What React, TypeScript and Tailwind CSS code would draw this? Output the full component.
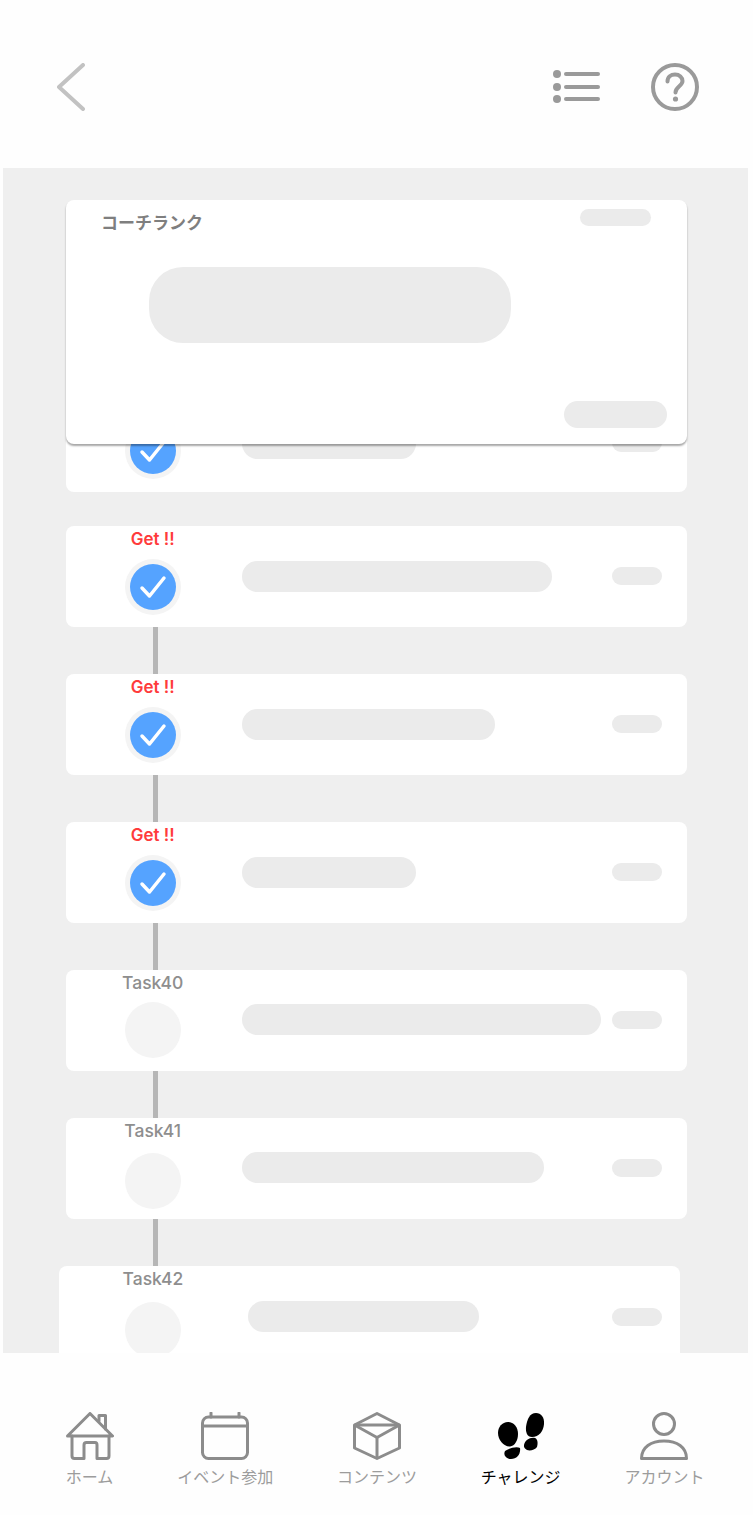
import React from "react";

const rows = [
  { label: "Get !!", done: true, bar: "w-[174px]", barTop: "mt-[37px]", pillTop: "mt-[43px]", gap: "mt-[9px]", labelTop: "mt-[3px]" },
  { label: "Get !!", done: true, bar: "w-[310px]", barTop: "mt-[35px]", pillTop: "mt-[41px]", gap: "mt-[10px]", labelTop: "mt-[3px]" },
  { label: "Get !!", done: true, bar: "w-[253px]", barTop: "mt-[35px]", pillTop: "mt-[41px]", gap: "mt-[10px]", labelTop: "mt-[3px]" },
  { label: "Get !!", done: true, bar: "w-[174px]", barTop: "mt-[34.5px]", pillTop: "mt-[41px]", gap: "mt-[10px]", labelTop: "mt-[3px]" },
  { label: "Task40", done: false, bar: "w-[359px]", barTop: "mt-[34px]", pillTop: "mt-[41px]", gap: "mt-[9px]", labelTop: "mt-[3px]" },
  { label: "Task41", done: false, bar: "w-[302px]", barTop: "mt-[34px]", pillTop: "mt-[41px]", gap: "mt-[12px]", labelTop: "mt-[3px]" },
];

const TaskCircle = ({ done }: { done: boolean }) => (
  <div className="flex h-[56px] w-[56px] items-center justify-center rounded-full bg-[#f4f4f4]">
    {done && (
      <div className="h-[46px] w-[46px] rounded-full bg-[#55a3ff]">
        <svg width="46" height="46" viewBox="0 0 46 46" fill="none">
          <path d="M12 24 L19.5 32 L34 14" stroke="#fff" strokeWidth="3.5" strokeLinecap="round" strokeLinejoin="round" />
        </svg>
      </div>
    )}
  </div>
);

const TaskLabel = ({ label, done, className }: { label: string; done: boolean; className: string }) => (
  <span
    className={`${className} h-[20px] whitespace-nowrap font-['Inter',sans-serif] leading-[20px] ${
      done ? "text-[17px] font-semibold text-[#ff3b3b]" : "text-[17.5px] font-medium text-[#8e8e8e]"
    }`}
  >
    {label}
  </span>
);

const Connector = () => <div className="ml-[149.5px] h-[47px] w-[5px] shrink-0 bg-[#b6b6b6]" />;

const HomeIcon = () => (
  <svg width="48" height="48" viewBox="0 0 48 48" fill="none" stroke="#8c8c8c" strokeWidth="3" strokeLinejoin="round" strokeLinecap="round">
    <path d="M1.5 24 L24 1.5 L46.5 24 Z" />
    <path d="M33 9 V3.5 H39.5 V17" />
    <path d="M6 24 V44 Q6 46.5 8.5 46.5 H18 V33 Q18 30.5 20.5 30.5 H29 Q31 30.5 31 33 V46.5 H40.5 Q43 46.5 43 44 V24" />
  </svg>
);

const CalendarIcon = () => (
  <svg width="48" height="48" viewBox="0 0 48 48" fill="none" stroke="#8c8c8c" strokeWidth="3" strokeLinecap="round">
    <rect x="1.5" y="5" width="45" height="41.5" rx="6" />
    <path d="M1.5 14 H46.5" />
    <path d="M10 1 V5 M38 1 V5" />
  </svg>
);

const BoxIcon = () => (
  <svg width="48" height="48" viewBox="0 0 48 48" fill="none" stroke="#8c8c8c" strokeWidth="3" strokeLinejoin="round">
    <path d="M24 1.5 L46.5 13 V36 L24 46.5 L1.5 36 V13 Z" />
    <path d="M1.5 13 H46.5" />
    <path d="M1.5 13 L24 25.5 L46.5 13" />
    <path d="M24 25.5 V46.5" />
  </svg>
);

const FeetIcon = () => (
  <svg width="48" height="48" viewBox="0 0 48 48" fill="#000">
    <path d="M11 10 C17 10 21 15 21 22 C21 28 18 34 13 34.5 C7 35 1 28 1 21 C1 15 5 10 11 10 Z" />
    <path d="M8 39 C12 36 20 34 23 36 C24 42 20 47 14 47 C9 47 6 43 8 39 Z" />
    <path d="M39 1 C44 1 47.5 5 47 12 C46.5 19 42 25 35 25 C30 25 28.5 20 29 15 C30 7 33 1 39 1 Z" />
    <path d="M27 33 C28 28 33 25 38 26 C41 27 41 32 40 35 C38 38 33 39 30 38 C28 37 26.5 35 27 33 Z" />
  </svg>
);

const PersonIcon = () => (
  <svg width="48" height="48" viewBox="0 0 48 48" fill="none" stroke="#8c8c8c" strokeWidth="3" strokeLinejoin="round">
    <circle cx="24" cy="12" r="10.5" />
    <path d="M1.5 46.5 C1.5 35 11 29 24 29 C37 29 46.5 35 46.5 46.5 Z" />
  </svg>
);

const navItems = [
  { label: "ホーム", icon: <HomeIcon />, active: false },
  { label: "イベント参加", icon: <CalendarIcon />, active: false },
  { label: "コンテンツ", icon: <BoxIcon />, active: false },
  { label: "チャレンジ", icon: <FeetIcon />, active: true },
  { label: "アカウント", icon: <PersonIcon />, active: false },
];

export default function App() {
  return (
    <div className="flex h-[1515px] w-[753px] flex-col overflow-hidden bg-[#fefefe] font-['Noto_Sans_CJK_JP',sans-serif]">
      {/* Header */}
      <header className="flex h-[168px] shrink-0 items-start pl-[57px] pr-[54px] pt-[63px]">
        <svg width="28" height="48" viewBox="0 0 28 48" fill="none" stroke="#c2c2c2" strokeWidth="4" strokeLinecap="round" strokeLinejoin="round">
          <path d="M26 2 L2 24 L26 46" />
        </svg>
        <svg className="ml-auto mt-[3px]" width="50" height="42" viewBox="0 0 50 42" fill="#9a9a9a">
          <circle cx="5" cy="8" r="4" />
          <circle cx="5" cy="21" r="4" />
          <circle cx="5" cy="33" r="4" />
          <rect x="12" y="6" width="36" height="4" rx="2" />
          <rect x="12" y="19" width="36" height="4" rx="2" />
          <rect x="12" y="31" width="36" height="4" rx="2" />
        </svg>
        <svg className="ml-[49px]" width="48" height="48" viewBox="0 0 48 48" fill="none" stroke="#9a9a9a" strokeWidth="4">
          <circle cx="24" cy="24" r="22" />
          <path d="M16.5 18.5 C16.5 14 20 11.5 24 11.5 C28.5 11.5 31.5 14.5 31.5 18 C31.5 23 24.5 23.5 24.5 29.5" strokeLinecap="round" />
          <circle cx="24.5" cy="36" r="2.6" fill="#9a9a9a" stroke="none" />
        </svg>
      </header>

      {/* Task list */}
      <main className="relative mx-[3px] h-[1185px] w-[745px] shrink-0 overflow-hidden bg-[#efefef]">
        <div className="flex flex-col pt-[223px]">
          {rows.map((row, i) => (
            <React.Fragment key={i}>
              <div className="ml-[62.5px] flex h-[101px] w-[621px] shrink-0 rounded-lg bg-white">
                <div className="flex w-[174.5px] shrink-0 flex-col items-center">
                  <TaskLabel label={row.label} done={row.done} className={row.labelTop} />
                  <div className={row.gap}>
                    <TaskCircle done={row.done} />
                  </div>
                </div>
                <div className={`ml-[1.5px] h-[31px] rounded-full bg-[#ebebeb] ${row.bar} ${row.barTop}`} />
                <div className={`ml-auto mr-[24.5px] h-[18px] w-[50px] rounded-full bg-[#ebebeb] ${row.pillTop}`} />
              </div>
              {i === 0 ? <div className="h-[34px] shrink-0" /> : <Connector />}
            </React.Fragment>
          ))}
          <div className="ml-[56px] flex h-[101px] w-[621px] shrink-0 rounded-lg bg-white">
            <div className="flex w-[188px] shrink-0 flex-col items-center">
              <TaskLabel label="Task42" done={false} className="mt-[3px]" />
              <div className="mt-[13px]">
                <TaskCircle done={false} />
              </div>
            </div>
            <div className="ml-[1px] mt-[35px] h-[31px] w-[231px] rounded-full bg-[#ebebeb]" />
            <div className="ml-auto mr-[18px] mt-[42px] h-[18px] w-[50px] rounded-full bg-[#ebebeb]" />
          </div>
        </div>

        {/* Rank card, lies over the list */}
        <div className="absolute left-[62.5px] top-[32px] flex h-[244px] w-[621px] flex-col rounded-lg bg-white shadow-[0_2px_2px_rgba(0,0,0,0.35)]">
          <div className="flex items-start justify-between pl-[35.5px] pr-[36px] pt-[9px]">
            <span className="text-[17px] font-bold leading-[26px] text-[#7f7f7f]">コーチランク</span>
            <div className="h-[17px] w-[71px] rounded-full bg-[#ebebeb]" />
          </div>
          <div className="ml-[83px] mt-[32px] h-[76px] w-[362px] rounded-[34px] bg-[#ebebeb]" />
          <div className="ml-auto mr-[20px] mt-[58px] h-[27px] w-[103px] rounded-full bg-[#ebebeb]" />
        </div>
      </main>

      {/* Bottom nav */}
      <nav className="flex flex-1 items-start gap-[63.75px] pl-[65.5px] pt-[59px]">
        {navItems.map((item) => (
          <div key={item.label} className="flex flex-col items-center">
            {item.icon}
            <span className={`mt-[4px] whitespace-nowrap text-[16px] leading-[24px] ${item.active ? "text-black" : "text-[#9c9c9c]"}`}>
              {item.label}
            </span>
          </div>
        ))}
      </nav>
    </div>
  );
}
